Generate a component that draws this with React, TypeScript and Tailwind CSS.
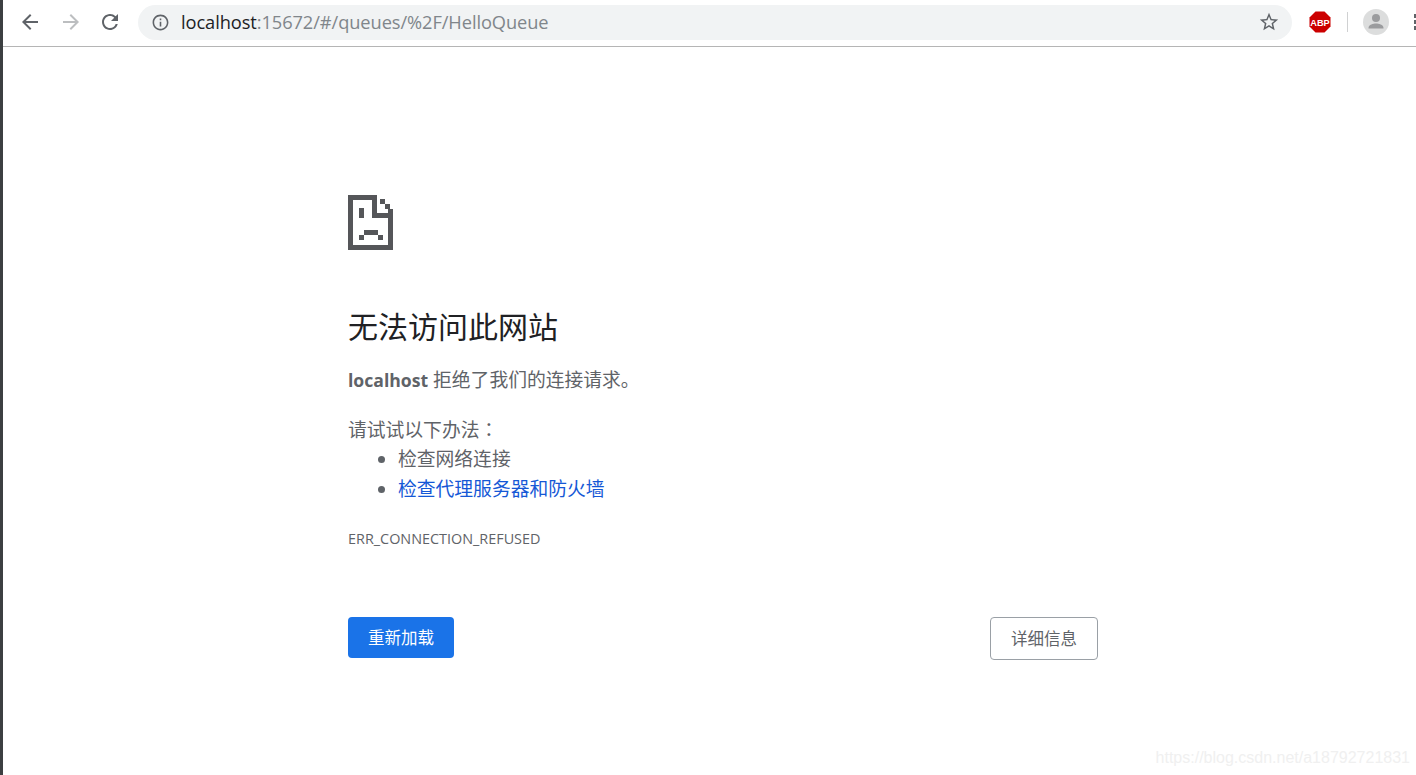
const font = "font-['Open_Sans','Noto_Sans_CJK_SC',sans-serif]";

function MaterialIcon({ d, size, className }: { d: string; size: number; className?: string }) {
  return (
    <svg width={size} height={size} viewBox="0 0 24 24" fill="currentColor" className={`shrink-0 ${className ?? ""}`}>
      <path d={d} />
    </svg>
  );
}

const icons = {
  back: "M20 11H7.83l5.59-5.59L12 4l-8 8 8 8 1.41-1.41L7.83 13H20v-2z",
  forward: "M4 11h12.17l-5.59-5.59L12 4l8 8-8 8-1.41-1.41L16.17 13H4v-2z",
  reload:
    "M17.65 6.35A7.958 7.958 0 0 0 12 4c-4.42 0-7.99 3.58-7.99 8s3.57 8 7.99 8c3.73 0 6.84-2.55 7.73-6h-2.08A5.99 5.99 0 0 1 12 18c-3.31 0-6-2.69-6-6s2.69-6 6-6c1.66 0 3.14.69 4.22 1.78L13 11h7V4l-2.35 2.35z",
  info: "M11 7h2v2h-2zm0 4h2v6h-2zm1-9C6.48 2 2 6.48 2 12s4.48 10 10 10 10-4.48 10-10S17.52 2 12 2zm0 18c-4.41 0-8-3.59-8-8s3.59-8 8-8 8 3.59 8 8-3.59 8-8 8z",
  star: "M22 9.24l-7.19-.62L12 2 9.19 8.63 2 9.24l5.46 4.73L5.82 21 12 17.27 18.18 21l-1.63-7.03L22 9.24zM12 15.4l-3.76 2.27 1-4.28-3.32-2.88 4.38-.38L12 6.1l1.71 4.04 4.38.38-3.32 2.88 1 4.28L12 15.4z",
};

function SadTab() {
  // pixel-art page icon from the chrome error page
  return (
    <svg width="45" height="55" viewBox="0 0 45 55" className="block" fill="#555659">
      <path d="M0 0h29v5H5v45h35V23H24V5h5v13h16v37H0z" />
      <rect x="32" y="4" width="5" height="5" />
      <rect x="37" y="9" width="5" height="5" />
      <rect x="40" y="14" width="5" height="5" />
      <rect x="11" y="13" width="5" height="10" />
      <rect x="16" y="35" width="14" height="5" />
      <rect x="11" y="40" width="5" height="5" />
      <rect x="30" y="40" width="5" height="5" />
    </svg>
  );
}

function Toolbar() {
  return (
    <div className="flex h-[47px] shrink-0 items-center border-b border-[#b5b5b5] pb-[2px] pl-[15px]">
      <MaterialIcon d={icons.back} size={24} className="text-[#5f6368]" />
      <MaterialIcon d={icons.forward} size={24} className="ml-[17px] text-[#bcbec0]" />
      <MaterialIcon d={icons.reload} size={24} className="ml-[15px] text-[#5f6368]" />
      <div className="ml-[16px] flex h-[35px] w-[1154px] shrink-0 items-center rounded-full bg-[#f1f3f4] pl-[13px] pr-[12px]">
        <MaterialIcon d={icons.info} size={19} className="text-[#5f6368]" />
        <div className="ml-[11px] font-['Open_Sans',sans-serif] text-[18.25px] tracking-[-0.08px] text-[#80868b]">
          <span className="text-[#202124]">localhost</span>:15672/#/queues/%2F/HelloQueue
        </div>
        <MaterialIcon d={icons.star} size={22} className="ml-auto text-[#5f6368]" />
      </div>
      <svg width="22" height="22" viewBox="0 0 22 22" className="ml-[17px] shrink-0">
        <path d="M6.5 0.5h9l6 6v9l-6 6h-9l-6-6v-9z" fill="#cc0000" />
        <text x="11" y="14.5" textAnchor="middle" fontSize="9.2" fontWeight="700" fill="#fff" fontFamily="Liberation Sans">ABP</text>
      </svg>
      <div className="ml-[16px] h-[20px] w-px shrink-0 bg-[#d0d1d2]" />
      <svg width="26" height="26" viewBox="0 0 26 26" className="ml-[15px] shrink-0">
        <circle cx="13" cy="13" r="13" fill="#dcdddd" />
        <circle cx="13" cy="9" r="4" fill="#9b9c9e" />
        <path d="M5.5 19c0-3.2 5-4.4 7.5-4.4s7.5 1.2 7.5 4.4v0.6h-15z" fill="#9b9c9e" />
      </svg>
      <div className="ml-[25px] flex shrink-0 flex-col gap-[2px]">
        <div className="h-[4px] w-[4px] bg-[#5f6368]" />
        <div className="h-[4px] w-[4px] bg-[#5f6368]" />
        <div className="h-[4px] w-[4px] bg-[#5f6368]" />
      </div>
    </div>
  );
}

export default function App() {
  return (
    <div className={`relative flex h-[775px] w-[1416px] flex-col overflow-hidden border-l-[3px] border-[#3c3f41] bg-white ${font}`}>
      <Toolbar />

      <main className="ml-[345px] w-[750px] pt-[148px] text-[#5f6368]">
        <SadTab />

        <h1 className="mt-[58px] text-[30px] leading-[38px] text-[#202124]">无法访问此网站</h1>

        <p className="mt-[19px] text-[18.8px] leading-[30px]">
          <strong className="text-[17.6px] font-bold">localhost</strong> 拒绝了我们的连接请求。
        </p>

        <p className="mt-[19px] text-[18.8px] leading-[30px]">
          请试试以下办法<span className="font-['Noto_Sans_CJK_TC',sans-serif]">：</span>
        </p>
        <ul className="-mt-[1px] list-disc pl-[50px] text-[18.8px] leading-[30px]">
          <li>检查网络连接</li>
          <li>
            <span className="text-[#1558d6]">检查代理服务器和防火墙</span>
          </li>
        </ul>

        <div className="mt-[25px] text-[14.4px] leading-[20px]">ERR_CONNECTION_REFUSED</div>

        <div className="mt-[68px] flex items-start justify-between">
          <button className="flex h-[41px] w-[106px] items-center justify-center rounded-[4px] bg-[#1a73e8] pt-[2px] text-[16.5px] text-white">
            重新加载
          </button>
          <button className="flex h-[43px] w-[108px] items-center justify-center rounded-[4px] border border-[#9aa0a6] bg-white pt-[2px] text-[16.5px] text-[#5f6368]">
            详细信息
          </button>
        </div>
      </main>

      <div className="absolute bottom-[5px] right-[6px] font-['Liberation_Sans',sans-serif] text-[16px] text-[#f0f0f0]">
        https://blog.csdn.net/a18792721831
      </div>
    </div>
  );
}
